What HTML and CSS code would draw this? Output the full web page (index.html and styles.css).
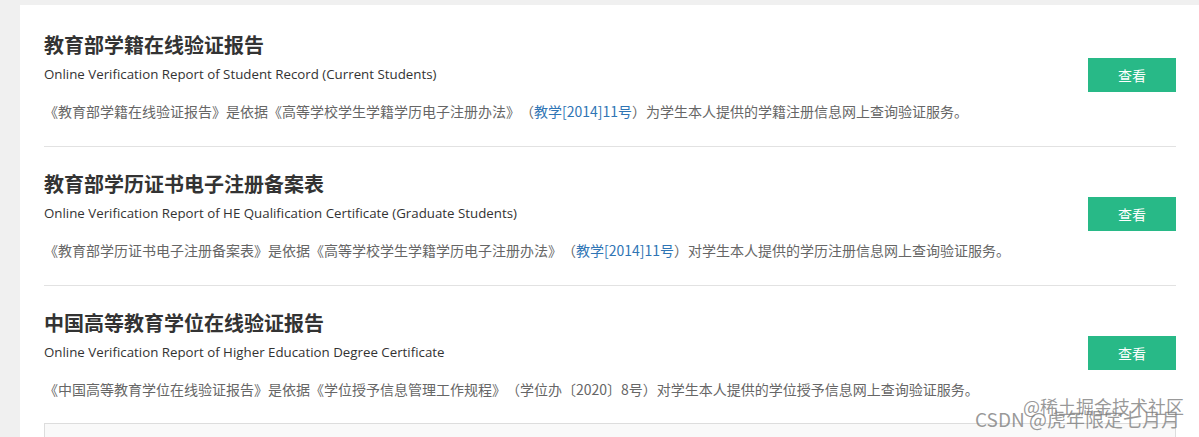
FILE: index.html
```html
<!DOCTYPE html>
<html lang="zh-CN">
<head>
<meta charset="utf-8">
<title>学信网 在线验证报告</title>
<link rel="stylesheet" href="styles.css">
</head>
<body>
<div class="page">
  <div class="card">
    <div class="item">
      <div class="info">
        <h2 class="title">教育部学籍在线验证报告</h2>
        <p class="en">Online Verification Report of Student Record (Current Students)</p>
        <p class="desc">《教育部学籍在线验证报告》是依据《高等学校学生学籍学历电子注册办法》（<a class="link" href="#">教学[2014]11号</a>）为学生本人提供的学籍注册信息网上查询验证服务。</p>
      </div>
      <a class="btn" href="#">查看</a>
    </div>
    <div class="item">
      <div class="info">
        <h2 class="title">教育部学历证书电子注册备案表</h2>
        <p class="en">Online Verification Report of HE Qualification Certificate (Graduate Students)</p>
        <p class="desc">《教育部学历证书电子注册备案表》是依据《高等学校学生学籍学历电子注册办法》（<a class="link" href="#">教学[2014]11号</a>）对学生本人提供的学历注册信息网上查询验证服务。</p>
      </div>
      <a class="btn" href="#">查看</a>
    </div>
    <div class="item last">
      <div class="info">
        <h2 class="title">中国高等教育学位在线验证报告</h2>
        <p class="en">Online Verification Report of Higher Education Degree Certificate</p>
        <p class="desc">《中国高等教育学位在线验证报告》是依据《学位授予信息管理工作规程》（学位办〔2020〕8号）对学生本人提供的学位授予信息网上查询验证服务。</p>
      </div>
      <a class="btn" href="#">查看</a>
    </div>
    <div class="notice"></div>
  </div>
  <div class="watermark">
    <span class="wm wm-a">@稀土掘金技术社区</span>
    <span class="wm wm-b">CSDN @虎年限定七月月</span>
  </div>
</div>
</body>
</html>
```
FILE: styles.css
```css
html, body {
  margin: 0;
  padding: 0;
}
body {
  background: #f0f0f0;
  font-family: "Noto Sans CJK SC", "Noto Sans", sans-serif;
  color: #333;
  overflow: hidden;
  text-spacing-trim: space-all;
}
.page {
  position: relative;
  height: 437px;
  padding: 5px 0 0 20px;
  box-sizing: border-box;
  overflow: hidden;
}
.card {
  background: #fff;
  padding: 3px 23px 0 24px;
  height: 100%;
  box-sizing: border-box;
  overflow: hidden;
}
.item {
  display: flex;
  align-items: center;
  border-bottom: 1px solid #e2e2e2;
  padding: 24px 0 25px;
}
.item.last {
  border-bottom: none;
  padding-bottom: 24px;
}
.info {
  flex: 1;
}
.title {
  margin: 0;
  font-size: 20px;
  line-height: 26px;
  font-weight: bold;
  color: #333;
}
.en {
  margin: 6px 0 0;
  font-family: "Open Sans", "Noto Sans CJK SC", sans-serif;
  font-size: 13.3px;
  line-height: 20px;
  color: #333;
}
.desc {
  margin: 17px 0 0;
  font-size: 14px;
  line-height: 20px;
  color: #666;
}
.link {
  color: #2f75b5;
  text-decoration: none;
}
.btn {
  width: 88px;
  height: 34px;
  line-height: 34px;
  margin-bottom: 4px;
  text-align: center;
  background: #28b987;
  color: #fff;
  font-size: 14px;
  text-decoration: none;
}
.notice {
  height: 40px;
  background: #f9f9f9;
  border: 1px solid #dddddd;
}
.watermark {
  position: absolute;
  left: 975px;
  top: 395px;
  width: 220px;
  height: 40px;
}
.wm {
  position: absolute;
  white-space: nowrap;
  color: rgba(120, 120, 120, 0.75);
  font-size: 19px;
  line-height: 22px;
}
.wm-a {
  left: 48px;
  top: 0;
  font-size: 18px;
}
.wm-b {
  left: 0;
  top: 13px;
}
```
